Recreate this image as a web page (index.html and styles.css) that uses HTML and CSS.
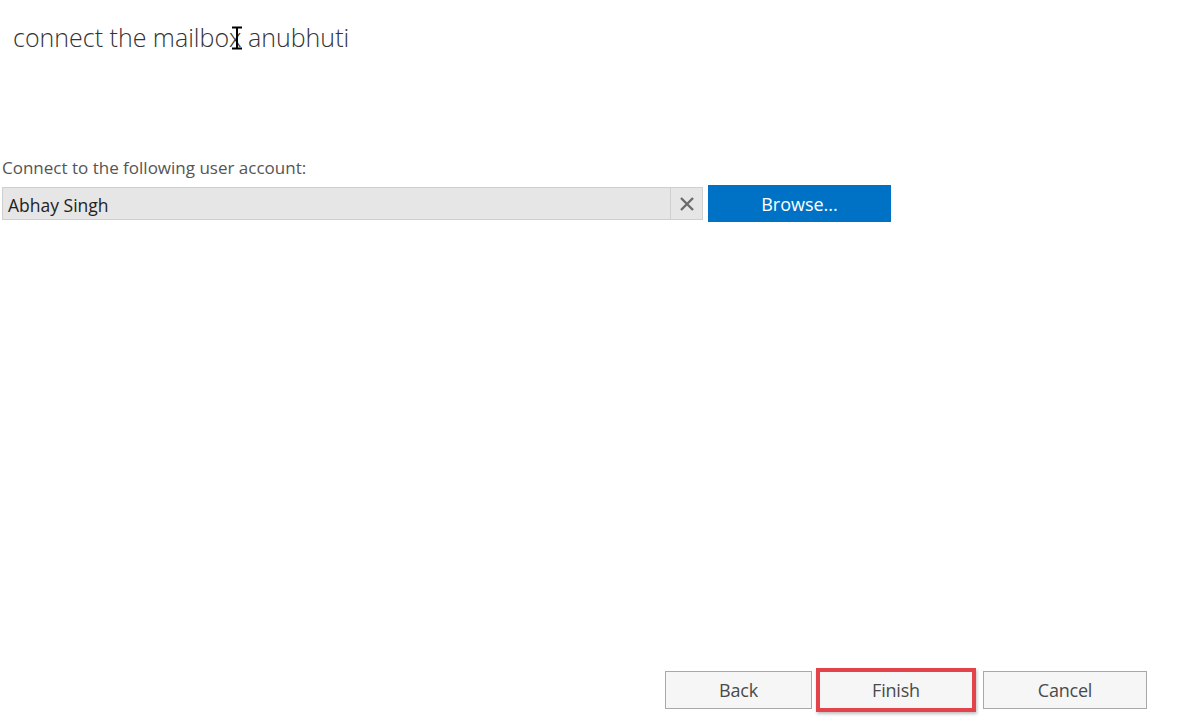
FILE: index.html
```html
<!DOCTYPE html>
<html>
<head>
<meta charset="utf-8">
<link rel="stylesheet" href="styles.css">
</head>
<body>
<div class="page">
  <h1 class="title">connect the mailbox anubhuti<svg class="cursor" width="14" height="24" viewBox="0 0 14 24"><path d="M2 1.5h4M8 1.5h4M7 2v20M2 22.5h4M8 22.5h4M6 1.5h2M6 22.5h2" stroke="#000" stroke-width="2" fill="none"/></svg></h1>
  <div class="field">
    <label class="label">Connect to the following user account:</label>
    <div class="row">
      <div class="input">
        <span class="value">Abhay Singh</span>
        <span class="clear"><svg width="16" height="16" viewBox="0 0 16 16"><path d="M2 2L14 14M14 2L2 14" stroke="#6b6b6b" stroke-width="2.4"/></svg></span>
      </div>
      <button class="browse">Browse...</button>
    </div>
  </div>
  <div class="spacer"></div>
  <div class="actions">
    <button class="btn">Back</button>
    <button class="btn finish">Finish</button>
    <button class="btn cancel">Cancel</button>
  </div>
</div>
</body>
</html>
```
FILE: styles.css
```css
html, body {
  margin: 0;
  padding: 0;
  background: #fff;
}
.page {
  width: 1181px;
  height: 725px;
  display: flex;
  flex-direction: column;
  font-family: "Open Sans", "Liberation Sans", sans-serif;
}
.title {
  position: relative;
  margin: 20px 0 0 13px;
  font-size: 25px;
  font-weight: 300;
  color: #333;
  line-height: 34px;
  letter-spacing: 0;
}
.cursor {
  position: absolute;
  left: 217px;
  top: 6px;
}
.field {
  margin-top: 102px;
  margin-left: 2px;
}
.label {
  display: block;
  font-size: 17px;
  color: #555;
  line-height: 24px;
}
.row {
  display: flex;
  align-items: center;
  margin-top: 5px;
}
.input {
  width: 699px;
  height: 31px;
  background: #e6e6e6;
  border: 1px solid #cfcfcf;
  display: flex;
  align-items: center;
  box-sizing: content-box;
}
.value {
  flex: 1;
  padding-left: 5px;
  padding-top: 3px;
  font-size: 17.5px;
  color: #222;
}
.clear {
  width: 31px;
  height: 31px;
  border-left: 1px solid #d0d0d0;
  display: flex;
  align-items: center;
  justify-content: center;
}
.browse {
  margin-left: 5px;
  width: 183px;
  height: 37px;
  background: #0072c6;
  border: none;
  color: #fff;
  font-family: inherit;
  font-size: 18px;
  padding: 0;
}
.spacer {
  flex: 1;
}
.actions {
  display: flex;
  margin-left: 665px;
  margin-bottom: 13px;
  align-items: center;
}
.btn {
  width: 147px;
  height: 38px;
  background: #f6f6f6;
  border: 1px solid #a8a8a8;
  box-sizing: border-box;
  font-family: inherit;
  font-size: 18px;
  color: #4a4a4a;
  padding: 0;
  letter-spacing: -0.2px;
}
.finish {
  margin-left: 4px;
  width: 160px;
  height: 44px;
  border: 4px solid #e3434a;
  box-shadow: 1px 2px 3px rgba(0,0,0,0.25);
}
.cancel {
  margin-left: 7px;
  width: 164px;
}
```
